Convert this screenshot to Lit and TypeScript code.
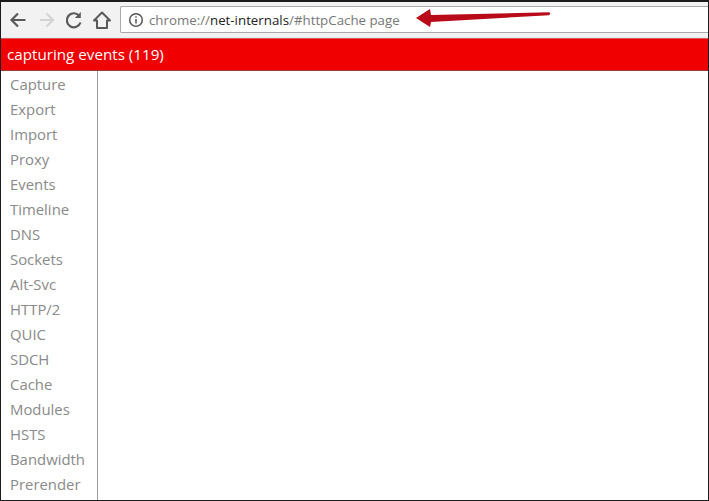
import { LitElement, html, css, svg } from "lit";
import { customElement } from "lit/decorators.js";

const NAV = ["Capture","Export","Import","Proxy","Events","Timeline","DNS","Sockets","Alt-Svc","HTTP/2","QUIC","SDCH","Cache","Modules","HSTS","Bandwidth","Prerender"];

@customElement("app-root")
export class AppRoot extends LitElement {
  static styles = css`
    :host { display: block; width: 709px; height: 501px; overflow: hidden; box-sizing: border-box;
      border: 1px solid #1c1c1c; border-top-width: 2px; background: #fff;
      font-family: "Open Sans", "Noto Sans", sans-serif; position: relative; }
    .toolbar { height: 36px; box-sizing: border-box; background: #f2f2f2; display: flex; align-items: center; padding-left: 6px; border-bottom: 1px solid #e4f0f0; }
    .btn { width: 24px; height: 24px; margin-right: 4px; flex: none; display: block; }
    .btn.home { margin-right: 5px; }
    .omni { flex: 1; height: 27px; background: #fff; border: 1px solid #a9a9a9; border-right: none; border-radius: 2px 0 0 2px; box-sizing: border-box; display: flex; align-items: center; padding-left: 7px; gap: 5px; font-size: 13.3px; color: #777; white-space: nowrap; position: relative; }
    .omni b { font-weight: 400; color: #222; }
    .arrow { position: absolute; left: 295px; top: 0; width: 136px; height: 22px; }
    .status { height: 33px; box-sizing: border-box; background: #f00000; color: #fff; font-size: 15.2px; line-height: 31px; padding-left: 6px; border-top: 1px solid #d85a5a; border-bottom: 1px solid #9a3a3a; }
    .main { display: flex; height: 429px; }
    nav { width: 97px; box-sizing: border-box; border-right: 1px solid #9c9c9c; padding: 1px 0 0 9px; flex: none; }
    nav div { height: 25px; line-height: 25px; font-size: 14.9px; color: #8a8a8a; }
  `;

  render() {
    return html`
      <div class="toolbar">
        <svg class="btn" viewBox="0 0 24 24" fill="none" stroke="#5a5a5a" stroke-width="2.2">
          <path d="M18.500 12H5M11 5.500 4.500 12l6.500 6.500"/>
        </svg>
        <svg class="btn" viewBox="0 0 24 24" fill="none" stroke="#d4d4d4" stroke-width="2.2">
          <path d="M5 12h13M11.500 5.500 18 12l-6.500 6.500"/>
        </svg>
        <svg class="btn" viewBox="0 0 24 24" fill="none" stroke="#5a5a5a" stroke-width="2.2">
          <path d="M17.500 14.500A7 7 0 1 1 16 7.500"/>
          <path d="M17.800 4v6h-6z" fill="#5a5a5a" stroke="none"/>
        </svg>
        <svg class="btn home" viewBox="0 0 24 24" fill="none" stroke="#5a5a5a" stroke-width="2">
          <path d="M11 4.500 3 12.500h3V20h10v-7.500h3z" stroke-linejoin="round"/>
        </svg>
        <div class="omni">
          <svg width="16" height="16" viewBox="0 0 16 16" fill="none" stroke="#555" stroke-width="1.500">
            <circle cx="8" cy="8" r="6.300"/>
            <path d="M8 7v4.500M8 4.200v1.600"/>
          </svg>
          <span>chrome://<b>net-internals</b>/#httpCache page</span>
          <svg class="arrow" viewBox="0 0 136 22">
            ${svg`<path d="M0 11 14 2l1 6 118-2.800q2.500 1.300 0 3L15 15l-1 5z" fill="#b80a18"/>`}
          </svg>
        </div>
      </div>
      <div class="status">capturing events (119)</div>
      <div class="main">
        <nav>${NAV.map(n => html`<div>${n}</div>`)}</nav>
      </div>
    `;
  }
}
